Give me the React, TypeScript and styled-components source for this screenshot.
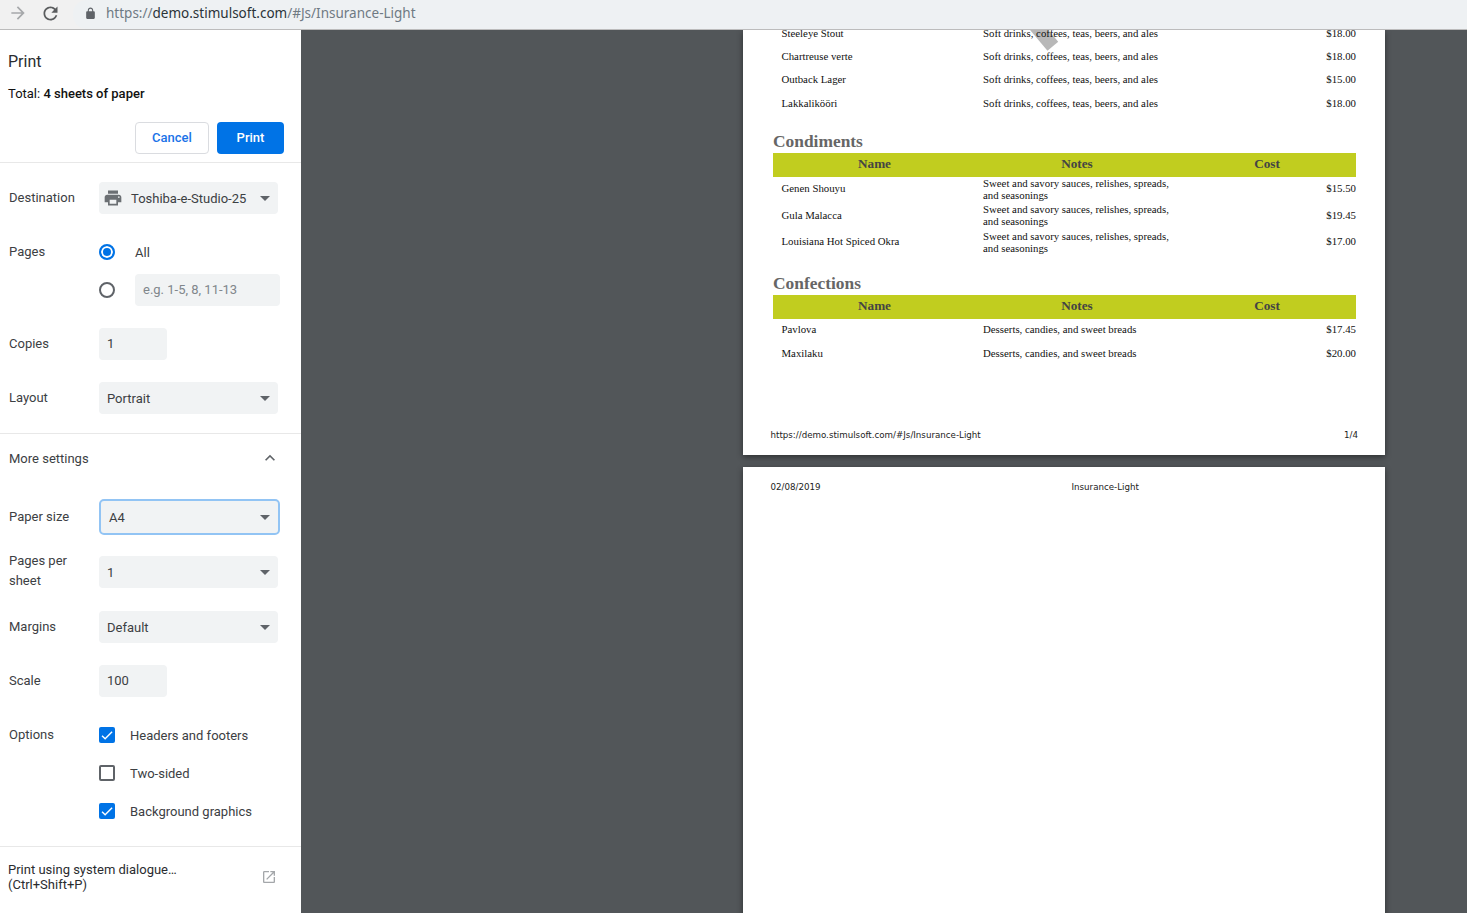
import React from "react";
import styled, { createGlobalStyle } from "styled-components";

const GlobalStyle = createGlobalStyle`
    html, body {
        margin: 0;
        padding: 0;
        height: 100%;
        overflow: hidden;
        background: #525659;
        font-family: Roboto, "Liberation Sans", sans-serif;
    }
    * {
        box-sizing: border-box;
    }
`;

const icons = {
    forward: "M12 4l-1.41 1.41L16.17 11H4v2h12.17l-5.58 5.59L12 20l8-8z",
    reload: "M17.65 6.35C16.2 4.9 14.21 4 12 4c-4.42 0-7.99 3.58-7.99 8s3.57 8 7.99 8c3.73 0 6.84-2.55 7.73-6h-2.08c-.82 2.33-3.04 4-5.65 4-3.31 0-6-2.69-6-6s2.69-6 6-6c1.66 0 3.14.69 4.22 1.78L13 11h7V4l-2.35 2.35z",
    lock: "M18 8h-1V6c0-2.76-2.24-5-5-5S7 3.24 7 6v2H6c-1.1 0-2 .9-2 2v10c0 1.1.9 2 2 2h12c1.1 0 2-.9 2-2V10c0-1.1-.9-2-2-2zM9 6c0-1.66 1.34-3 3-3s3 1.34 3 3v2H9V6z",
    printer: "M19 8H5c-1.66 0-3 1.34-3 3v6h4v4h12v-4h4v-6c0-1.66-1.34-3-3-3zm-3 11H8v-5h8v5zm3-7c-.55 0-1-.45-1-1s.45-1 1-1 1 .45 1 1-.45 1-1 1zm-1-9H6v4h12V3z",
    less: "M12 8l-6 6 1.41 1.41L12 10.83l4.59 4.58L18 14z",
    open: "M19 19H5V5h7V3H5c-1.11 0-2 .9-2 2v14c0 1.1.89 2 2 2h14c1.1 0 2-.9 2-2v-7h-2v7zM14 3v2h3.59l-9.83 9.83 1.41 1.41L19 6.41V10h2V3h-7z",
    check: "M9.2 16.2L5.3 12.3l-1.5 1.5 5.4 5.4L20.4 8l-1.5-1.5z",
};

const Icon = ({ name, size, color }: { name: keyof typeof icons; size: number; color: string }) => (
    <svg width={size} height={size} viewBox="0 0 24 24" fill={color} style={{ flexShrink: 0 }}>
        <path d={icons[name]} />
    </svg>
);

const beverages = [
    ["Steeleye Stout", "$18.00"],
    ["Chartreuse verte", "$18.00"],
    ["Outback Lager", "$15.00"],
    ["Lakkalikööri", "$18.00"],
];

const condiments = [
    ["Genen Shouyu", "$15.50"],
    ["Gula Malacca", "$19.45"],
    ["Louisiana Hot Spiced Okra", "$17.00"],
];

const confections = [
    ["Pavlova", "$17.45"],
    ["Maxilaku", "$20.00"],
];

const App = () => {
    return (
        <Window>
            <GlobalStyle />
            <Toolbar>
                <NavIcons>
                    <Icon name="forward" size={20} color="#a6a8aa" />
                    <Icon name="reload" size={21} color="#5a5c5e" />
                </NavIcons>
                <Omnibox>
                    <Icon name="lock" size={13} color="#5f6368" />
                    <Url>
                        https://<b>demo.stimulsoft.com</b>/#Js/Insurance-Light
                    </Url>
                </Omnibox>
            </Toolbar>
            <Body>
                <Sidebar>
                    <Header>
                        <Title>Print</Title>
                        <Total>
                            Total: <strong>4 sheets of paper</strong>
                        </Total>
                        <Buttons>
                            <CancelButton>Cancel</CancelButton>
                            <PrintButton>Print</PrintButton>
                        </Buttons>
                    </Header>
                    <Section>
                        <Row>
                            <Label>Destination</Label>
                            <Select>
                                <PrinterGlyph>
                                    <Icon name="printer" size={20} color="#6b6f73" />
                                </PrinterGlyph>
                                <SelectText $indent={8}>Toshiba-e-Studio-25</SelectText>
                                <Caret />
                            </Select>
                        </Row>
                        <Row $gap={6}>
                            <Label>Pages</Label>
                            <RadioLine>
                                <Radio $on />
                                <RadioText>All</RadioText>
                            </RadioLine>
                        </Row>
                        <Row>
                            <Label />
                            <RadioLine>
                                <Radio />
                                <PagesInput>e.g. 1-5, 8, 11-13</PagesInput>
                            </RadioLine>
                        </Row>
                        <Row>
                            <Label>Copies</Label>
                            <NumberBox>1</NumberBox>
                        </Row>
                        <Row $gap={19}>
                            <Label>Layout</Label>
                            <Select>
                                <SelectText>Portrait</SelectText>
                                <Caret />
                            </Select>
                        </Row>
                    </Section>
                    <MoreSettings>
                        <span>More settings</span>
                        <Icon name="less" size={20} color="#5f6368" />
                    </MoreSettings>
                    <Settings>
                        <Row $gap={21}>
                            <Label>Paper size</Label>
                            <FocusedSelect>
                                <SelectText>A4</SelectText>
                                <Caret />
                            </FocusedSelect>
                        </Row>
                        <Row $gap={23}>
                            <WrapLabel>
                                Pages per
                                <br />
                                sheet
                            </WrapLabel>
                            <Select>
                                <SelectText>1</SelectText>
                                <Caret />
                            </Select>
                        </Row>
                        <Row>
                            <Label>Margins</Label>
                            <Select>
                                <SelectText>Default</SelectText>
                                <Caret />
                            </Select>
                        </Row>
                        <Row $gap={30}>
                            <Label>Scale</Label>
                            <NumberBox>100</NumberBox>
                        </Row>
                        <OptionRow>
                            <Label>Options</Label>
                            <CheckLine>
                                <CheckBox $on>
                                    <Icon name="check" size={16} color="#fff" />
                                </CheckBox>
                                <span>Headers and footers</span>
                            </CheckLine>
                        </OptionRow>
                        <OptionRow>
                            <Label />
                            <CheckLine>
                                <CheckBox />
                                <span>Two-sided</span>
                            </CheckLine>
                        </OptionRow>
                        <OptionRow>
                            <Label />
                            <CheckLine>
                                <CheckBox $on>
                                    <Icon name="check" size={16} color="#fff" />
                                </CheckBox>
                                <span>Background graphics</span>
                            </CheckLine>
                        </OptionRow>
                    </Settings>
                    <SystemDialog>
                        <span>
                            Print using system dialogue…
                            <br />
                            (Ctrl+Shift+P)
                        </span>
                        <Icon name="open" size={16} color="#a4a7aa" />
                    </SystemDialog>
                </Sidebar>
                <Preview>
                    <FirstPage>
                        <Stamp />
                        <Rows $shift={-9}>
                            {beverages.map(([name, cost]) => (
                                <ItemRow key={name}>
                                    <span>{name}</span>
                                    <span>Soft drinks, coffees, teas, beers, and ales</span>
                                    <Cost>{cost}</Cost>
                                </ItemRow>
                            ))}
                        </Rows>
                        <Category $top={15}>Condiments</Category>
                        <TableHead>
                            <span>Name</span>
                            <span>Notes</span>
                            <span>Cost</span>
                        </TableHead>
                        <Rows $shift={-1.5}>
                            {condiments.map(([name, cost]) => (
                                <TallRow key={name}>
                                    <span>{name}</span>
                                    <Notes>
                                        Sweet and savory sauces, relishes, spreads,
                                        <br />
                                        and seasonings
                                    </Notes>
                                    <Cost>{cost}</Cost>
                                </TallRow>
                            ))}
                        </Rows>
                        <Category $top={17.5}>Confections</Category>
                        <TableHead>
                            <span>Name</span>
                            <span>Notes</span>
                            <span>Cost</span>
                        </TableHead>
                        <Rows $shift={-1}>
                            {confections.map(([name, cost]) => (
                                <ItemRow key={name}>
                                    <span>{name}</span>
                                    <span>Desserts, candies, and sweet breads</span>
                                    <Cost>{cost}</Cost>
                                </ItemRow>
                            ))}
                        </Rows>
                        <Footer>
                            <span>https://demo.stimulsoft.com/#Js/Insurance-Light</span>
                            <span>1/4</span>
                        </Footer>
                    </FirstPage>
                    <SecondPage>
                        <PageHeader>
                            <span>02/08/2019</span>
                            <span>Insurance-Light</span>
                        </PageHeader>
                    </SecondPage>
                </Preview>
            </Body>
        </Window>
    );
};

const Window = styled.div`
    height: 100vh;
    display: flex;
    flex-direction: column;
    overflow: hidden;
`;

const Toolbar = styled.div`
    height: 30px;
    flex-shrink: 0;
    display: flex;
    background: #f1f1f1;
    border-bottom: 1px solid #bcbcbc;
`;

const NavIcons = styled.div`
    width: 73px;
    display: flex;
    align-items: center;
    gap: 12px;
    padding-left: 8px;
    padding-bottom: 3px;
`;

const Omnibox = styled.div`
    flex: 1;
    display: flex;
    align-items: center;
    padding: 0 0 3px 11px;
    gap: 9px;
    background: #eef1f3;
    border-radius: 14px 0 0 14px;
`;

const Url = styled.div`
    font-family: "Noto Sans", sans-serif;
    font-size: 13.5px;
    line-height: 18px;
    margin-bottom: 1px;
    color: #6f7a83;
    white-space: nowrap;
    b {
        font-weight: 400;
        color: #2a3338;
    }
`;

const Body = styled.div`
    flex: 1;
    display: flex;
    min-height: 0;
`;

const Sidebar = styled.aside`
    width: 301px;
    flex-shrink: 0;
    background: #fff;
    color: #202124;
    font-size: 13px;
`;

const Header = styled.div`
    height: 133px;
    padding: 22px 17px 0 8px;
    border-bottom: 1px solid #e8e8e8;
`;

const Title = styled.div`
    font-size: 16px;
    line-height: 19px;
    color: #2a2c2f;
`;

const Total = styled.div`
    margin-top: 15px;
    line-height: 16px;
    color: #111;
    strong {
        font-weight: 500;
    }
`;

const Buttons = styled.div`
    display: flex;
    justify-content: flex-end;
    gap: 8px;
    margin-top: 20px;
`;

const CancelButton = styled.button`
    width: 74px;
    height: 32px;
    padding: 0 0 2px;
    background: #fff;
    border: 1px solid #dadce0;
    border-radius: 4px;
    color: #1a73e8;
    font: 500 13px Roboto, sans-serif;
`;

const PrintButton = styled.button`
    width: 67px;
    height: 32px;
    padding: 0 0 2px;
    background: #0073e6;
    border: 0;
    border-radius: 4px;
    color: #fff;
    font: 500 13px Roboto, sans-serif;
`;

const Section = styled.div`
    padding: 19px 0 0 9px;
    height: 271px;
    border-bottom: 1px solid #e8e8e8;
`;

const Settings = styled.div`
    padding: 16px 0 0 9px;
    height: 364px;
    border-bottom: 1px solid #e8e8e8;
`;

const Row = styled.div<{ $gap?: number }>`
    display: flex;
    align-items: center;
    min-height: 32px;
    margin-bottom: ${(props) => props.$gap ?? 22}px;
`;

const OptionRow = styled.div`
    display: flex;
    align-items: center;
    height: 16px;
    margin-bottom: 22px;
`;

const Label = styled.div`
    width: 90px;
    flex-shrink: 0;
    padding-bottom: 2px;
    color: #3c4043;
`;

const WrapLabel = styled(Label)`
    line-height: 20px;
    margin: -5px 0;
`;

const Select = styled.div`
    width: 179px;
    height: 32px;
    display: flex;
    align-items: center;
    padding: 0 8px 0 5px;
    background: #f1f3f4;
    border-radius: 4px;
    color: #3c4043;
`;

const FocusedSelect = styled(Select)`
    width: 181px;
    height: 36px;
    padding: 0 8px 0 5px;
    border: 2px solid #92c4f4;
    border-radius: 5px;
`;

const PrinterGlyph = styled.span`
    display: flex;
    margin-left: -1px;
`;

const SelectText = styled.span<{ $indent?: number }>`
    flex: 1;
    padding-left: ${(props) => props.$indent ?? 3}px;
    white-space: nowrap;
`;

const Caret = styled.i`
    width: 0;
    height: 0;
    border-left: 5px solid transparent;
    border-right: 5px solid transparent;
    border-top: 5px solid #5f6368;
`;

const RadioLine = styled.div`
    display: flex;
    align-items: center;
    height: 32px;
`;

const Radio = styled.span<{ $on?: boolean }>`
    width: 16px;
    height: 16px;
    margin-right: 20px;
    border-radius: 50%;
    border: 2px solid ${(props) => (props.$on ? "#0073e6" : "#5f6368")};
    background: ${(props) => (props.$on ? "#0073e6" : "#fff")};
    box-shadow: ${(props) => (props.$on ? "inset 0 0 0 2px #fff" : "none")};
`;

const RadioText = styled.span`
    color: #3c4043;
`;

const PagesInput = styled.div`
    width: 145px;
    height: 32px;
    display: flex;
    align-items: center;
    padding: 0 0 2px 8px;
    background: #f1f3f4;
    border-radius: 4px;
    color: #80868b;
`;

const NumberBox = styled.div`
    width: 68px;
    height: 32px;
    display: flex;
    align-items: center;
    padding: 0 0 2px 8px;
    background: #f1f3f4;
    border-radius: 4px;
    color: #3c4043;
`;

const MoreSettings = styled.div`
    height: 49px;
    display: flex;
    align-items: center;
    justify-content: space-between;
    padding: 0 21px 1px 9px;
    color: #3c4043;
`;

const CheckLine = styled.div`
    display: flex;
    align-items: center;
    height: 16px;
    gap: 15px;
    color: #3c4043;
`;

const CheckBox = styled.span<{ $on?: boolean }>`
    width: 16px;
    height: 16px;
    display: flex;
    align-items: center;
    justify-content: center;
    border-radius: 2px;
    background: ${(props) => (props.$on ? "#0073e6" : "#fff")};
    border: ${(props) => (props.$on ? "0" : "2px solid #5f6368")};
`;

const SystemDialog = styled.div`
    display: flex;
    align-items: center;
    justify-content: space-between;
    padding: 15px 24px 0 8px;
    line-height: 15px;
    color: #2a2c2f;
`;

const Preview = styled.main`
    flex: 1;
    min-width: 0;
    padding-left: 442px;
    background: #525659;
    overflow: hidden;
`;

const Page = styled.section`
    position: relative;
    width: 642px;
    background: #fff;
    box-shadow: 0 2px 6px rgba(0, 0, 0, 0.45);
    font-family: "Liberation Serif", serif;
    color: #111;
`;

const FirstPage = styled(Page)`
    height: 425px;
    padding: 0 29px 0 30px;
    overflow: hidden;
`;

const SecondPage = styled(Page)`
    height: 500px;
    margin-top: 12px;
    padding: 14px 27px 14px 27.5px;
`;

const Stamp = styled.div`
    position: absolute;
    left: 277px;
    top: -6px;
    width: 40px;
    height: 14px;
    background: #b8b8b8;
    transform: rotate(50deg);
`;

const Rows = styled.div<{ $shift: number }>`
    position: relative;
    margin-top: ${(props) => props.$shift}px;
`;

const ItemRow = styled.div`
    display: grid;
    grid-template-columns: 203px 202px 178px;
    align-items: center;
    height: 23.4px;
    padding-left: 8.5px;
    font-size: 10.8px;
    > span:first-child {
        margin-right: -8.5px;
    }
    > span:nth-child(2) {
        margin-left: -1.5px;
    }
`;

const TallRow = styled(ItemRow)`
    height: 26.4px;
    line-height: 12px;
`;

const Notes = styled.span`
    white-space: nowrap;
    padding-top: 1px;
`;

const Cost = styled.span`
    text-align: right;
    transform: translateX(-8.5px);
`;

const Category = styled.h2<{ $top: number }>`
    margin: ${(props) => props.$top}px 0 0;
    height: 23px;
    font-size: 17.4px;
    line-height: 23px;
    font-weight: 700;
    color: #666;
`;

const TableHead = styled.div`
    display: grid;
    grid-template-columns: 203px 202px 178px;
    align-items: center;
    height: 24px;
    padding-bottom: 2px;
    background: #c1cd1f;
    font-size: 13.2px;
    font-weight: 700;
    color: #444;
    text-align: center;
`;

const Footer = styled.div`
    position: absolute;
    left: 27.5px;
    right: 27px;
    bottom: 14px;
    display: flex;
    justify-content: space-between;
    font-family: "DejaVu Sans", sans-serif;
    font-size: 8.7px;
    line-height: 12px;
    color: #222;
`;

const PageHeader = styled.div`
    display: grid;
    grid-template-columns: 301px auto;
    font-family: "DejaVu Sans", sans-serif;
    font-size: 8.7px;
    line-height: 12px;
    color: #222;
`;

export default App;
